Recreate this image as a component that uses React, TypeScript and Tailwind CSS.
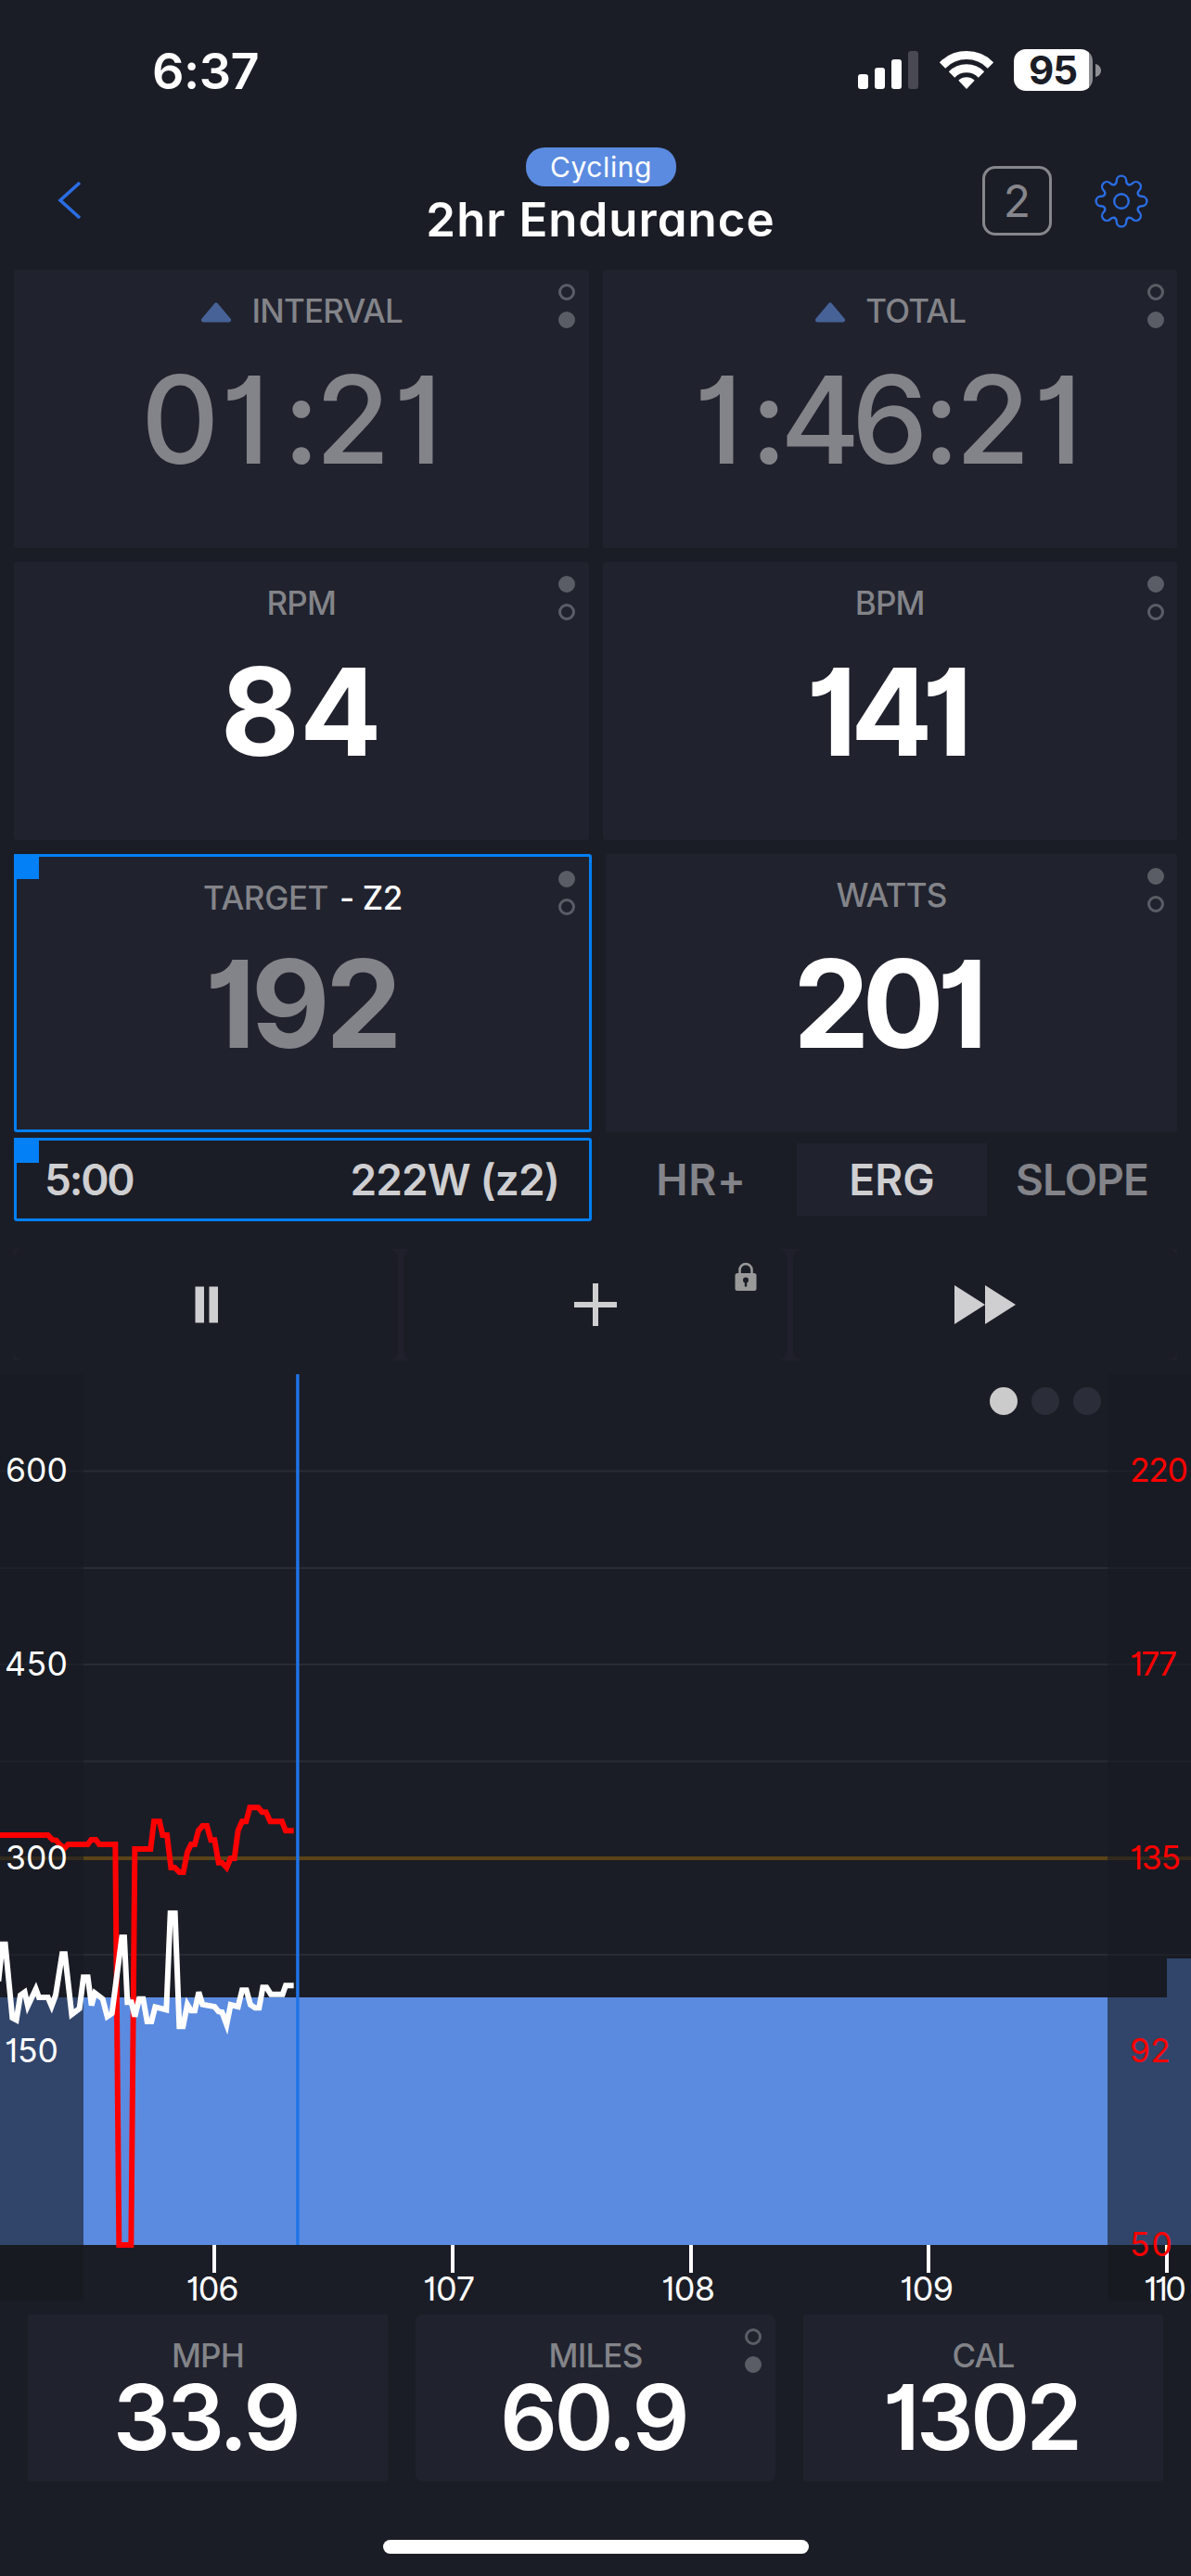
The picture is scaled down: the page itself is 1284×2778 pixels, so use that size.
import { ReactNode } from "react";
import clsx from "clsx";

type MetricProps = {
  label: ReactNode;
  value: ReactNode;
  activeDot?: 0 | 1;
  muted?: boolean;
  trend?: boolean;
  selected?: boolean;
  valueClass?: string;
};

const TICKS = [
  { x: 231, labelX: 229, label: "106", width: 57 },
  { x: 488, labelX: 484, label: "107", width: 56 },
  { x: 745, labelX: 742, label: "108", width: 58 },
  { x: 1001, labelX: 999, label: "109", width: 58 },
  { x: 1258, labelX: 1256, label: "110", width: 46 },
];

const GRID_Y = [104.5, 209, 313, 417.5, 626];

const POWER_LABELS = [
  { y: 116, label: "600", x: 6, width: 67 },
  { y: 325, label: "450", x: 5, width: 68 },
  { y: 534, label: "300", x: 6, width: 67 },
  { y: 742, label: "150", x: 5, width: 58 },
];

const HEART_LABELS = [
  { y: 116, label: "220", width: 63 },
  { y: 325, label: "177", width: 51 },
  { y: 534, label: "135", width: 55 },
  { y: 742, label: "92", width: 44 },
  { y: 950.5, label: "50", width: 46 },
];

const HEART_LINE =
  "-5,297 155,297 170,312 182,314 192,326 208,340 220,327 284,327 295,312 310,312 321,327 373,327 385,1623 424,1623 436,342 487,342 498,253 516,253 526,297 540,297 553,402 565,402 580,417 593,417 606,352 618,327 630,327 642,282 655,267 669,267 682,313 694,313 707,386 718,386 733,402 746,372 758,372 770,282 783,253 796,253 808,208 835,208 848,223 860,223 874,253 912,253 924,283 950,283";

const POWER_LINE =
  "-5,770 8,650 17,650 40,888 53,895 66,815 80,805 90,850 116,795 126,822 155,822 167,850 180,815 201,682 210,682 232,877 257,858 270,757 284,757 296,848 307,808 332,827 347,884 362,874 394,628 402,628 412,838 425,838 436,884 450,827 463,827 476,900 490,900 502,853 538,862 551,550 566,550 580,916 592,916 606,845 618,865 630,865 643,805 655,845 694,852 707,868 718,870 733,910 746,846 770,852 783,799 797,799 810,846 825,856 838,856 850,790 862,790 876,812 914,812 924,784 950,784";

function StatusBar() {
  return (
    <div className="flex h-[154px] items-start pl-[164px] text-white">
      <span className="mt-[50px] text-[54px] leading-[53px] font-semibold tracking-[-0.5px]">
        6:37
      </span>
      <div className="mt-[53px] ml-auto flex items-start pr-[97px]">
        <svg width="66" height="45" viewBox="0 0 66 45" fill="#fff">
          <rect x="0" y="27" width="11" height="16" rx="3" />
          <rect x="18" y="20" width="11" height="23" rx="3" />
          <rect x="36" y="11" width="11" height="32" rx="3" />
          <rect x="54" y="2" width="11" height="41" rx="3" fill="#484952" />
        </svg>
        <svg
          className="ml-[22px]"
          width="58"
          height="45"
          viewBox="0 0 58 45"
          fill="none"
          stroke="#fff"
          strokeWidth="9"
        >
          <path d="M3 17.5A36.5 36.5 0 0 1 55 17.5" />
          <path d="M13 27.5A22.6 22.6 0 0 1 45 27.5" />
          <path d="M20.3 33.8L29 43L37.7 33.8A12.6 12.6 0 0 0 20.3 33.8Z" fill="#fff" stroke="none" />
        </svg>
        <div className="ml-[22px] flex h-[45px] w-[85px] items-center justify-center rounded-[13px] bg-linear-to-r from-white from-95% to-[#8d8e93] to-95% pr-[1px]">
          <span className="text-[42px] leading-[45px] font-bold text-[#1b1d26] tracking-[-1px]">95</span>
        </div>
        <svg className="mt-[16px] ml-[3px]" width="6" height="14" viewBox="0 0 6 14">
          <path d="M0 0C8 2 8 12 0 14Z" fill="#8d8e93" />
        </svg>
      </div>
    </div>
  );
}

function Gear() {
  return (
    <svg width="60" height="60" viewBox="-30 -30 60 60" fill="none" stroke="#2a6de3" strokeWidth="2.4" strokeLinecap="round">
      <circle r="7.8" />
      {[0, 45, 90, 135, 180, 225, 270, 315].map((angle) => (
        <path
          key={angle}
          transform={`rotate(${angle})`}
          d="M-7.4 -18Q-5.2 -18.8 -5.2 -22.2A5.2 5.2 0 0 1 5.2 -22.2Q5.2 -18.8 7.4 -18"
        />
      ))}
    </svg>
  );
}

function Header() {
  return (
    <div className="flex h-[137px] items-start">
      <div className="w-[401px] pt-[41px] pl-[61px]">
        <svg width="28" height="42" viewBox="0 0 28 42" fill="none" stroke="#2a6de3" strokeWidth="3.6">
          <path d="M25 2L4 21L25 40" />
        </svg>
      </div>
      <div className="flex w-[494px] flex-col items-center pt-[5px]">
        <span className="flex h-[42px] w-[162px] items-center justify-center rounded-[20px] bg-[#5b8be0] text-[30px] leading-[43px] tracking-[0.6px] text-white">
          Cycling
        </span>
        <h1 className="mt-[11px] pr-[1px] text-[51px] leading-[50px] font-semibold tracking-[1px] whitespace-nowrap text-white">
          2hr Endurance
        </h1>
      </div>
      <div className="flex flex-1 items-center pt-[25px] pl-[164px]">
        <div className="flex size-[75px] items-center justify-center rounded-[14px] border-[3px] border-[#86878c] text-[48px] leading-none text-[#86878c]">
          2
        </div>
        <div className="ml-[45px]">
          <Gear />
        </div>
      </div>
    </div>
  );
}

function Dots({ active, className }: { active: 0 | 1; className: string }) {
  return (
    <div className={clsx("absolute flex flex-col gap-[12px]", className)}>
      {[0, 1].map((i) => (
        <span
          key={i}
          className={clsx(
            "size-[18px] rounded-full border-[3px] border-[#5b5d66]",
            i === active && "bg-[#5b5d66]"
          )}
        />
      ))}
    </div>
  );
}

function Clock({ time }: { time: string }) {
  return (
    <span className="flex font-medium">
      {time.split("").map((char, i) => (
        <span
          key={i}
          className={clsx(
            "flex justify-center",
            char === ":" ? "w-[36px]" : "w-[75px]",
            char === "1" && (i === 0 ? "pl-[2px]" : "pr-[10px]")
          )}
        >
          {char}
        </span>
      ))}
    </span>
  );
}

function Metric({ label, value, activeDot = 0, muted, trend, selected, valueClass }: MetricProps) {
  return (
    <div
      className={clsx(
        "relative flex h-[300px] flex-col items-center rounded-[3px] bg-[#20222e] pt-[27px]",
        selected ? "w-[623px] flex-none" : "flex-1"
      )}
    >
      <div
        className={clsx(
          "flex h-[35px] items-center text-[35px] leading-[35px] font-medium whitespace-nowrap text-[#838489]",
          selected ? "mt-[3px] -mb-[3px] tracking-[-0.4px]" : "tracking-[-0.8px]",
          trend && "pl-[1px]"
        )}
      >
        {trend && (
          <svg className="mt-[2px] mr-[21px]" width="34" height="22" viewBox="0 0 34 22">
            <path d="M17 3L30.5 19H3.5Z" fill="#466297" stroke="#466297" strokeWidth="5" strokeLinejoin="round" />
          </svg>
        )}
        {label}
      </div>
      <div
        className={clsx(
          "mt-[34px] text-[131px] leading-[132px]",
          muted ? "text-[#838489]" : "text-white",
          valueClass
        )}
      >
        {value}
      </div>
      {selected && (
        <>
          <span className="absolute inset-0 rounded-[3px] border-[3px] border-[#0380f5]" />
          <span className="absolute top-0 left-0 size-[27px] bg-[#0380f5]" />
        </>
      )}
      <Dots
        active={activeDot}
        className={selected ? "top-[18px] right-[18px]" : "top-[15px] right-[14.5px]"}
      />
    </div>
  );
}

function Controls() {
  return (
    <div className="mx-[15px] mt-[30px] flex h-[120px] gap-[6px] bg-[#1f202c]">
      <button className="flex w-[414px] items-center justify-center rounded-[10px] bg-[#1b1d26] pl-[2px]">
        <svg width="26" height="40" viewBox="0 0 26 40" fill="#cfcfd1">
          <rect x="0.5" y="0.5" width="9.5" height="39" />
          <rect x="15.5" y="0.5" width="9.5" height="39" />
        </svg>
      </button>
      <button className="relative flex w-[414px] items-center justify-center rounded-[10px] bg-[#1b1d26]">
        <svg width="46" height="46" viewBox="0 0 46 46" stroke="#cfcfd1" strokeWidth="6">
          <path d="M0 23H46M23 0V46" />
        </svg>
        <svg className="absolute top-[14px] right-[33px]" width="24" height="32" viewBox="0 0 24 32">
          <path d="M5.5 14V8.5A6.5 6.5 0 0 1 18.5 8.5V14" fill="none" stroke="#999" strokeWidth="2.6" />
          <rect x="0.5" y="12" width="23" height="19" rx="2.5" fill="#999" />
          <circle cx="12" cy="19.5" r="3" fill="#1b1d26" />
          <rect x="10.8" y="20" width="2.4" height="6.5" fill="#1b1d26" />
        </svg>
      </button>
      <button className="flex w-[414px] items-center justify-center rounded-[10px] bg-[#1b1d26]">
        <svg width="66" height="42" viewBox="0 0 66 42" fill="#cfcfd1">
          <path d="M0 0L33 21L0 42ZM33 0L66 21L33 42Z" />
        </svg>
      </button>
    </div>
  );
}

function Chart() {
  return (
    <div className="relative mt-[15px] h-[999px] w-[1284px]">
      <svg className="overflow-visible" width="1284" height="999" viewBox="0 0 1284 999">
        {GRID_Y.map((y) => (
          <rect key={y} x="0" y={y - 1} width="1284" height="2" fill="#2a2c35" />
        ))}
        <rect x="0" y="520" width="1284" height="4" fill="#5a4318" />
        <path d="M0 672H1258V630H1284V939H0Z" fill="#5b8be0" />

        {/* out of view margins */}
        <rect x="0" y="0" width="90" height="672" fill="#181a22" fillOpacity="0.6" />
        <rect x="0" y="672" width="90" height="267" fill="#31456b" />
        <rect x="0" y="939" width="90" height="60" fill="#181a22" />
        <path d="M1194 0H1284V630H1258V672H1194Z" fill="#181a22" fillOpacity="0.6" />
        <path d="M1194 672H1258V630H1284V939H1194Z" fill="#31456b" />
        <rect x="1194" y="939" width="90" height="60" fill="#181a22" />

        <rect x="319.2" y="0" width="3.4" height="939" fill="#1f74e8" />
        <g transform="translate(0 398) scale(0.33333)" fill="none" strokeLinejoin="miter">
          <polyline points={HEART_LINE} stroke="#ff0000" strokeWidth="18" />
          <polyline points={POWER_LINE} stroke="#ffffff" strokeWidth="18" />
        </g>

        {TICKS.map(({ x, labelX, label, width }) => (
          <g key={label} fill="#fff">
            <rect x={x - 2} y="939" width="4" height="30" />
            <text x={labelX} y="998.5" textAnchor="middle" fontSize="36" textLength={width}>
              {label}
            </text>
          </g>
        ))}
        {POWER_LABELS.map(({ x, y, label, width }) => (
          <text key={label} x={x} y={y} fontSize="35.5" fill="#fff" textLength={width}>
            {label}
          </text>
        ))}
        {HEART_LABELS.map(({ y, label, width }) => (
          <text key={label} x="1218" y={y} fontSize="35.5" fill="#ff0000" textLength={width}>
            {label}
          </text>
        ))}
      </svg>
      <div className="absolute top-[14px] right-[97px] flex gap-[15px]">
        <span className="size-[30px] rounded-full bg-[#cbcbcb]" />
        <span className="size-[30px] rounded-full bg-[#2b2d38]" />
        <span className="size-[30px] rounded-full bg-[#2b2d38]" />
      </div>
    </div>
  );
}

function Stat({ label, value, dots }: { label: string; value: ReactNode; dots?: boolean }) {
  return (
    <div
      className={clsx(
        "relative flex h-[180px] w-[388px] flex-col items-center bg-[#20222e] pt-[27px]",
        dots ? "rounded-[8px]" : "rounded-[3px]"
      )}
    >
      <span className="text-[35px] leading-[35px] font-medium tracking-[-0.8px] text-[#838489]">{label}</span>
      <span className="mt-[1px] mr-[5px] text-[97px] leading-[96px] font-semibold tracking-[-3.6px] text-white">
        {value}
      </span>
      {dots && <Dots active={1} className="top-[15px] right-[15px]" />}
    </div>
  );
}

export default function App() {
  return (
    <div className="flex h-[2778px] w-[1284px] flex-col overflow-hidden bg-[#1b1d26] font-['Inter',sans-serif] [font-feature-settings:'cv01','cv11']">
      <StatusBar />
      <Header />

      <div className="flex flex-col gap-[15px] px-[15px]">
        <div className="flex gap-[15px]">
          <Metric label="INTERVAL" value={<Clock time="01:21" />} activeDot={1} muted trend />
          <Metric label="TOTAL" value={<Clock time="1:46:21" />} activeDot={1} muted trend />
        </div>
        <div className="flex gap-[15px]">
          <Metric label="RPM" value="84" valueClass="font-bold" />
          <Metric label="BPM" value="141" valueClass="font-bold tracking-[-7px] pr-[8px]" />
        </div>
        <div className="flex gap-[15px]">
          <Metric
            label={
              <>
                TARGET<span className="ml-[12px] text-white">- Z2</span>
              </>
            }
            value="192"
            valueClass="font-bold tracking-[-5px] pr-[4px]"
            muted
            selected
          />
          <Metric label="WATTS" value="201" valueClass="font-bold tracking-[-8px] pr-[10px]" />
        </div>
      </div>

      <div className="mt-[6px] flex h-[90px] pl-[15px] text-[46px] leading-[46px] font-semibold">
        <div className="relative flex w-[623px] items-center justify-between rounded-[3px] border-[3px] border-[#0380f5] pr-[32px] pl-[30px] text-[#cfcfd1]">
          <span className="absolute -top-[3px] -left-[3px] size-[27px] bg-[#0380f5]" />
          <span className="tracking-[-2.2px]">5:00</span>
          <span className="tracking-[-0.9px]">222W (z2)</span>
        </div>
        <div className="mt-[6px] ml-[15px] flex h-[78px] text-[#838489]">
          <span className="flex w-[206px] items-center justify-center tracking-[0.8px]">HR+</span>
          <span className="flex w-[205px] items-center justify-center bg-[#20222e] text-[#cfcfd1]">ERG</span>
          <span className="flex w-[205px] items-center justify-center tracking-[-0.9px]">SLOPE</span>
        </div>
      </div>

      <Controls />
      <Chart />

      <div className="mt-[15px] flex gap-[30px] px-[30px]">
        <Stat label="MPH" value="33.9" />
        <Stat label="MILES" value="60.9" dots />
        <Stat label="CAL" value="1302" />
      </div>

      <div className="mx-auto mt-[63px] h-[15px] w-[459px] rounded-full bg-white" />
    </div>
  );
}
